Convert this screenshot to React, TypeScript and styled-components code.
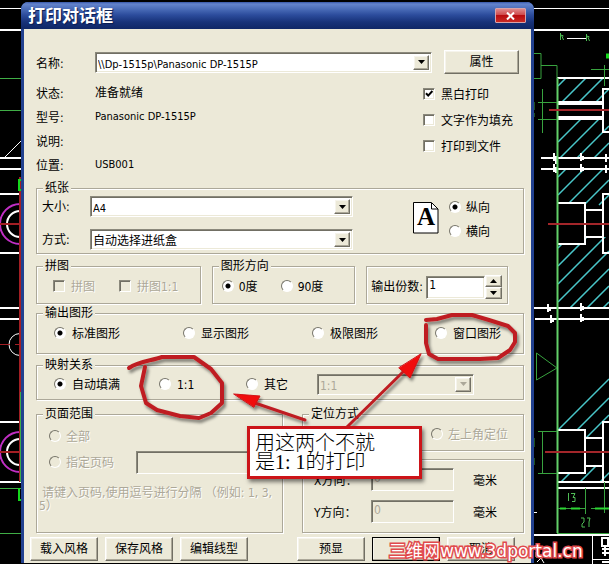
import React from 'react';
import styled, { createGlobalStyle, css } from 'styled-components';

const face = '#ece9d8';
const shade = '#aca899';
const ui = '"DejaVu Sans Condensed", "Noto Sans CJK SC", sans-serif';

const GlobalStyle = createGlobalStyle`
  *, *::before, *::after { box-sizing: border-box; }
  body {
    margin: 0;
    background: #000;
    color: #000;
    font: 12px/14px ${ui};
  }
`;

const sunken = css`
  border: 1px solid;
  border-color: #8b897c #fff #fff #8b897c;
  box-shadow: inset 1px 1px 0 #716f64, inset -1px -1px 0 ${face};
`;

const raised = css`
  border: 1px solid;
  border-color: #fff #716f64 #716f64 #fff;
  box-shadow: inset -1px -1px 0 ${shade}, inset 1px 1px 0 #f6f4ec;
  background: ${face};
`;

const Desktop = styled.main`
  position: relative;
  min-height: 100vh;
  padding: 2px 75px 0 21px;
  overflow: hidden;
`;

const Drawing = styled.svg<{ $side: 'left' | 'right' }>`
  position: absolute;
  top: 0;
  ${p => p.$side}: 0;
`;

const Dialog = styled.section`
  position: relative;
  border: solid #22418f;
  border-width: 0 3px;
  border-radius: 7px 7px 0 0;
  background: ${face};
`;

const TitleBar = styled.header`
  display: flex;
  align-items: center;
  justify-content: space-between;
  height: 27px;
  margin: 0 -3px;
  padding: 0 8px 0 7px;
  border-radius: 7px 7px 0 0;
  background: linear-gradient(#3656a8 0, #6484cc 2px, #4a6cb8 7px, #2c4c9c 13px, #173279 20px, #0f2766 100%);
`;

const Title = styled.h1`
  margin: 0;
  color: #fff;
  font-size: 17px;
  line-height: 24px;
  font-weight: 700;
  text-shadow: 1px 1px 1px #0a1c50;
`;

const CloseButton = styled.button`
  display: flex;
  align-items: center;
  justify-content: center;
  width: 31px;
  height: 15px;
  padding: 0;
  border: 1px solid #d9a3a8;
  border-radius: 1px;
  background: linear-gradient(#e0888a 0, #cf4a4c 45%, #b80c10 50%, #c92a24 100%);
`;

const Form = styled.form`
  padding: 21px 7px 2px 12px;
`;

const NameRow = styled.div`
  display: flex;
  align-items: center;
  height: 24px;
  padding-right: 5px;
`;

const NameLabel = styled.label`
  flex: 0 0 59px;
  padding-top: 4px;
`;

const Combo = styled.span<{ $off?: boolean }>`
  display: flex;
  flex: 1;
  height: 21px;
  padding: 2px;
  background: ${p => (p.$off ? face : '#fff')};
  ${sunken}
`;

const Select = styled.select<{ $latin?: boolean }>`
  appearance: none;
  flex: 1;
  min-width: 0;
  padding: 2px 0 0;
  border: 0;
  background: transparent;
  color: #000;
  font: ${p => (p.$latin ? 11 : 12)}px/15px ${ui};
  &:disabled { color: ${shade}; opacity: 1; }
`;

const ArrowBox = styled.span`
  display: flex;
  align-items: center;
  justify-content: center;
  flex: 0 0 16px;
  ${raised}
`;

const Button = styled.button<{ $primary?: boolean }>`
  height: 24px;
  padding: 0;
  color: #000;
  font: 12px/14px ${ui};
  ${raised}
  ${p => p.$primary && 'outline: 1px solid #000; outline-offset: -1px;'}
`;

const PropertyButton = styled(Button)`
  width: 75px;
  margin-left: 12px;
`;

const InfoRow = styled.div`
  display: flex;
  justify-content: space-between;
  height: 107px;
  padding-top: 7px;
`;

const Facts = styled.dl`
  display: grid;
  grid-template-columns: 59px auto;
  grid-auto-rows: 24px;
  align-items: center;
  margin: 0;
  dt, dd { margin: 0; }
  dt { padding-top: 2px; }
`;

const LatinFact = styled.dd`
  font-size: 11px;
`;

const Options = styled.div`
  display: grid;
  grid-auto-rows: 26px;
  width: 101px;
`;

const Choice = styled.label<{ $off?: boolean; $gap?: number }>`
  display: flex;
  align-items: center;
  gap: ${p => p.$gap ?? 6}px;
  white-space: nowrap;
  ${p => p.$off && `color: ${shade}; text-shadow: 1px 1px 0 #fff;`}
`;

const Caption = styled.span`
  padding-top: 2px;
`;

const Check = styled.input.attrs({ type: 'checkbox' })`
  appearance: none;
  flex: none;
  width: 12px;
  height: 12px;
  margin: 0;
  ${sunken}
  background: #fff;
  &:disabled { background: ${face}; }
  &:checked {
    background: #fff url("data:image/svg+xml,%3Csvg xmlns='http://www.w3.org/2000/svg' viewBox='0 0 10 10'%3E%3Cpath d='M2 4.2l2.2 2.4L8.4 2' fill='none' stroke='black' stroke-width='2'/%3E%3C/svg%3E") center / 10px 10px;
  }
`;

const Radio = styled.input.attrs({ type: 'radio' })`
  appearance: none;
  flex: none;
  width: 12px;
  height: 12px;
  margin: 0;
  border: 1px solid;
  border-color: #77756a #fff #fff #77756a;
  border-radius: 50%;
  background: #fff;
  &:disabled { background: ${face}; }
  &:checked { background: radial-gradient(circle, #000 2px, #fff 3px); }
`;

const Group = styled.fieldset`
  min-width: 0;
  margin: 0;
  padding: 0;
  border: 1px solid ${shade};
  box-shadow: 1px 1px 0 #fff, inset 1px 1px 0 #fff;
`;

const Legend = styled.legend`
  margin-left: 6px;
  padding: 0 2px;
  background: ${face};
  line-height: 14px;
`;

const PaperBody = styled.div`
  display: flex;
  justify-content: space-between;
  padding: 1px 33px 3px 5px;
`;

const PaperFields = styled.div`
  display: grid;
  grid-template-columns: 48px 1fr;
  row-gap: 12px;
  align-items: center;
  flex: 0 1 311px;
`;

const Orientation = styled.div`
  display: flex;
  gap: 10px;
  padding-top: 6px;
`;

const OrientationChoices = styled.div`
  display: grid;
  grid-auto-rows: 24px;
  height: 48px;
  margin-top: -7px;
`;

const TripleRow = styled.div`
  display: grid;
  grid-template-columns: 165fr 144fr 142fr;
  gap: 0 11px;
  margin: 5px 16px 0 0;
`;

const MiniRow = styled.div<{ $cols: string; $left: number }>`
  display: grid;
  grid-template-columns: ${p => p.$cols};
  align-items: center;
  height: 30px;
  padding: 0 0 4px ${p => p.$left}px;
`;

const Copies = styled(Group)`
  display: flex;
  align-items: center;
  margin-top: 7px;
  padding: 4px 5px 0 4px;
`;

const CopiesLabel = styled.label`
  flex: 0 0 55px;
  white-space: nowrap;
`;

const TextBox = styled.input`
  min-width: 0;
  height: 23px;
  padding: 0 2px 4px;
  color: #000;
  font: 12px/14px ${ui};
  background: #fff;
  ${sunken}
  &:disabled { background: ${face}; color: ${shade}; }
`;

const CopiesBox = styled(TextBox)`
  flex: 1;
`;

const Spinner = styled.span`
  display: grid;
  grid-template-rows: 12px 12px;
  flex: 0 0 17px;
`;

const SpinButton = styled.button`
  display: flex;
  align-items: center;
  justify-content: center;
  padding: 0;
  ${raised}
`;

const OutputGroup = styled(Group)`
  margin-top: 2px;
`;

const OutputRow = styled.div`
  display: grid;
  grid-template-columns: 129fr 129fr 123fr 88fr;
  height: 33px;
  padding: 0 0 7px 17px;
`;

const MappingGroup = styled(Group)`
  margin-top: 4px;
`;

const MappingRow = styled.div`
  display: grid;
  grid-template-columns: 105fr 87fr 71fr 157fr;
  align-items: center;
  height: 27px;
  padding: 0 49px 3px 17px;
`;

const LowerRow = styled.div`
  display: grid;
  grid-template-columns: 247fr 222fr;
  gap: 19px;
  margin-top: 7px;
`;

const RangeBody = styled.div`
  padding: 2px 10px 19px 12px;
`;

const RangeLine = styled.div`
  display: flex;
  align-items: center;
  gap: 22px;
  height: 26px;
`;

const RangeBox = styled(TextBox)`
  flex: 1;
`;

const Hint = styled.p`
  margin: 12px -8px 0 -10px;
  color: ${shade};
  text-shadow: 1px 1px 0 #fff;
  line-height: 13px;
  text-indent: 3px;
  word-break: break-all;
`;

const RightStack = styled.div`
  display: flex;
  flex-direction: column;
  gap: 8px;
`;

const AnchorRow = styled.div`
  display: flex;
  align-items: center;
  justify-content: flex-end;
  height: 29px;
  padding: 0 15px 4px 12px;
`;

const OffsetGroup = styled(Group)`
  display: grid;
  grid-template-columns: 57px 83px auto;
  grid-auto-rows: 23px;
  gap: 9px 0;
  align-items: center;
  flex: 1;
  padding: 8px 0 0 11px;
  label, span { padding-top: 2px; }
`;

const Unit = styled.span`
  padding-left: 19px;
`;

const Actions = styled.footer`
  display: flex;
  justify-content: space-between;
  margin: 4px 9px 0 -6px;
`;

const ActionSet = styled.div`
  display: grid;
  grid-template-columns: repeat(3, 68px);
  gap: 7px;
`;

const Markup = styled.svg`
  position: absolute;
  top: 0;
  left: 0;
  pointer-events: none;
`;

const Callout = styled.p`
  position: absolute;
  left: 247px;
  top: 426px;
  width: 175px;
  margin: 0;
  padding: 5px 0 4px 5px;
  border: 3px solid #cc1419;
  background: #fff;
  box-shadow: 2px 3px 4px rgba(0, 0, 0, 0.5);
  font: 20px/19px "Liberation Serif", "Noto Sans CJK SC", serif;
  font-weight: 300;
`;

const Watermark = styled.a`
  position: absolute;
  left: 389px;
  top: 539px;
  color: #fff;
  font: 17px/24px "DejaVu Sans", "Noto Sans CJK SC", sans-serif;
  text-decoration: none;
  white-space: nowrap;
  paint-order: stroke fill;
  -webkit-text-stroke: 3px #e04a4c;
`;

const Triangle = ({ up = false, color = '#000' }: { up?: boolean; color?: string }) => (
  <svg width="7" height="4" viewBox="0 0 7 4" aria-hidden="true">
    <path d={up ? 'M0 4L3.5 0L7 4z' : 'M0 0h7L3.5 4z'} fill={color} />
  </svg>
);

type DropProps = { id: string; value: string; latin?: boolean; off?: boolean };
const Drop = ({ id, value, latin, off }: DropProps) => (
  <Combo $off={off}>
    <Select id={id} $latin={latin} disabled={off} aria-label={off ? '比例' : undefined}>
      <option>{value}</option>
    </Select>
    <ArrowBox><Triangle color={off ? shade : '#000'} /></ArrowBox>
  </Combo>
);

type OptionProps = { name: string; text: string; on?: boolean; off?: boolean; gap?: number };
const RadioOption = ({ name, text, on, off, gap }: OptionProps) => (
  <Choice $off={off} $gap={gap}>
    <Radio name={name} defaultChecked={on} disabled={off} />
    <Caption>{text}</Caption>
  </Choice>
);
const CheckOption = ({ name, text, on, off }: OptionProps) => (
  <Choice $off={off}>
    <Check name={name} defaultChecked={on} disabled={off} />
    <Caption>{text}</Caption>
  </Choice>
);

const LeftDrawing = () => (
  <Drawing $side="left" width="22" height="564" viewBox="0 0 22 564" fill="none" aria-hidden="true">
    <path d="M0 8.5h22M5 157L22 140" stroke="#fff" />
    <path d="M0 30h22M0 158h22M0 169h22M0 194h22M0 253h22M0 308h22M0 319h22M0 422h22M0 482h22" stroke="#fff" strokeWidth="2" />
    <path d="M0 78.5h22M0 110.5h22M0 488.5h22M0 533.5h22" stroke="#3fae46" />
    <circle cx="20" cy="224" r="20" stroke="#c02fc4" strokeWidth="2" />
    <circle cx="20" cy="224" r="13" stroke="#fff" strokeWidth="2" />
    <circle cx="20" cy="344.5" r="11" stroke="#fff" />
    <circle cx="20" cy="452" r="20" stroke="#c02fc4" strokeWidth="2" />
    <circle cx="20" cy="452" r="13" stroke="#fff" strokeWidth="2" />
    <path d="M0 224h22M0 452h22M20 177v215" stroke="#a31f24" strokeWidth="2" />
    <path d="M0 344.5h10m5 0h7M19.5 392v90" stroke="#a31f24" />
    <path d="M20.5 392v90" stroke="#3fae46" />
    <path d="M22 180h-3v10h3M19 488v12h3" stroke="#15d81c" strokeWidth="2" />
  </Drawing>
);

const RightDrawing = () => (
  <Drawing $side="right" width="76" height="564" viewBox="533 0 76 564" fill="none" aria-hidden="true">
    <defs>
      <clipPath id="hatchA"><path d="M558 78h51v24h-51zM558 119h51v39h-51zM558 170h51v33h-51zM585 203h24v7h-24zM558 244h28v-7h23v70h-51z" /></clipPath>
      <clipPath id="hatchB"><path d="M558 430V410L609 370V438H586V430zM558 473h27v-7h24v15h-51z" /></clipPath>
    </defs>
    <g stroke="#49c6c9" strokeWidth="1.5">
      <g clipPath="url(#hatchA)">
        <path d="M558 86l12-12M558 106l32-32M575 106l34-34M592 106l17-17M558 142l26-26M558 160l44-44M575 160l34-34M592 160l17-17M558 177l20-20M558 195l30-30M567 205l42-42M584 205l25-25M599 205l10-10M558 248l14-14M558 266l34-34M558 284l51-51M558 302l51-51M568 310l41-41M585 310l24-24M601 310l8-8" />
      </g>
      <g clipPath="url(#hatchB)"><path d="M558 430l51-51M575 432l34-34M585 439l24-24M558 485l17-17M577 485l22-22M597 485l14-14" /></g>
    </g>
    <path d="M533 8.500h76M567 38.500h20" stroke="#fff" />
    <path d="M533 30h76M557 78h52M557 158h52M541 158h16M541 169h68M557 203h28v41h-28M585 210h18M585 237h18M609 194h-6v59h6M609 89h-6v43h6M533 308h76M535 319h74M557 430h28v43h-28M585 438h18M585 466h18M609 422h-6v60M557 482h52M557 488h52M533 535h76" stroke="#fff" strokeWidth="2" />
    <path d="M557 103h46M557 118h46" stroke="#fff" strokeWidth="4" />
    <path d="M554 153v8M556 156v8M581 153v8M583 156v4M554 164v8M556 167v6M581 164v8M583 167v4M606 154v8M606 165v8M548 304v8M550 307v4M581 303v8M583 306v4M551 315v8M553 318v4M581 314v8M583 317v4" stroke="#fff" strokeWidth="2" />
    <path d="M557.500 78v455" stroke="#62cf68" strokeWidth="2" />
    <path d="M533 53.500h8v25h-8M541 65.500h16v13M591 69.500h18M604.500 65v21M542.500 89v44M538 102.500h19M538 119.500h19M536.500 353v27l20.500-12zM538 431.500h19M538 473.500h19M542.500 431v42M585.500 488v26M604.500 482v31M558 508.500h27M591 508.500h18M557 533.500h52M534 102v8M534 113v4M534 438v9M534 458v7" stroke="#38a33f" />
    <path d="M560 508.500h6M571 508.500h9M595 508.500h14" stroke="#2bd633" strokeWidth="2" />
    <path d="M549 110h60M548 224h61M545 452h64" stroke="#a3262a" strokeWidth="2" />
    <path d="M560.500 33v7M563.500 40l-2-5 2 1M586.500 34v7M589.500 41l-2-5 2 1M568.500 493v8M571 493.500h4l-2 4h2v4h-3M581 518h3v4l-2 2v3h3M587 518h3l-1 4v5" stroke="#4fbd55" />
    <path d="M606 56h3" stroke="#15d81c" strokeWidth="5" />
    <path d="M533 512.500h4M592.500 536v28M593 559.500h16M536 552v5h3M537 562l4-4 3 5" stroke="#fff" />
    <path d="M602 538h6v8h-6zM602 549h7M605 546v10M602 553h7M602 562h7" stroke="#fff" strokeWidth="2" />
  </Drawing>
);

export default function App() {
  return (
    <Desktop>
      <GlobalStyle />
      <LeftDrawing />
      <RightDrawing />
      <Dialog role="dialog" aria-labelledby="title">
        <TitleBar>
          <Title id="title">打印对话框</Title>
          <CloseButton aria-label="关闭">
            <svg width="9" height="8" viewBox="0 0 9 8" aria-hidden="true">
              <path d="M1 0.500L8 7.500M8 0.500L1 7.500" stroke="#fff" strokeWidth="2" />
            </svg>
          </CloseButton>
        </TitleBar>
        <Form onSubmit={e => e.preventDefault()}>
          <NameRow>
            <NameLabel htmlFor="printer">名称:</NameLabel>
            <Drop id="printer" value="\\Dp-1515p\Panasonic DP-1515P" latin />
            <PropertyButton type="button">属性</PropertyButton>
          </NameRow>
          <InfoRow>
            <Facts>
              <dt>状态:</dt><dd>准备就绪</dd>
              <dt>型号:</dt><LatinFact>Panasonic DP-1515P</LatinFact>
              <dt>说明:</dt><dd />
              <dt>位置:</dt><LatinFact>USB001</LatinFact>
            </Facts>
            <Options>
              <CheckOption name="mono" text="黑白打印" on />
              <CheckOption name="fill" text="文字作为填充" />
              <CheckOption name="file" text="打印到文件" />
            </Options>
          </InfoRow>

          <Group>
            <Legend>纸张</Legend>
            <PaperBody>
              <PaperFields>
                <label htmlFor="size">大小:</label>
                <Drop id="size" value="A4" latin />
                <label htmlFor="source">方式:</label>
                <Drop id="source" value="自动选择进纸盒" />
              </PaperFields>
              <Orientation>
                <svg width="26" height="32" viewBox="0 0 26 32" aria-hidden="true">
                  <path d="M0.500 0.500h18l6.500 6.500v24H0.500z" fill="#fff" stroke="#000" />
                  <path d="M18.500 1v6H25" fill="none" stroke="#000" />
                  <text x="13" y="23" textAnchor="middle" fontFamily="Liberation Serif" fontWeight="700" fontSize="25">A</text>
                </svg>
                <OrientationChoices>
                  <RadioOption name="orient" text="纵向" on gap={5} />
                  <RadioOption name="orient" text="横向" gap={5} />
                </OrientationChoices>
              </Orientation>
            </PaperBody>
          </Group>

          <TripleRow>
            <Group>
              <Legend>拼图</Legend>
              <MiniRow $cols="66px auto" $left={16}>
                <CheckOption name="tile" text="拼图" off />
                <CheckOption name="tile1" text="拼图1:1" off />
              </MiniRow>
            </Group>
            <Group>
              <Legend>图形方向</Legend>
              <MiniRow $cols="59px auto" $left={9}>
                <RadioOption name="angle" text="0度" on gap={5} />
                <RadioOption name="angle" text="90度" gap={5} />
              </MiniRow>
            </Group>
            <Copies aria-label="输出份数">
              <CopiesLabel htmlFor="copies">输出份数:</CopiesLabel>
              <CopiesBox id="copies" defaultValue="1" />
              <Spinner>
                <SpinButton type="button" aria-label="增加"><Triangle up /></SpinButton>
                <SpinButton type="button" aria-label="减少"><Triangle /></SpinButton>
              </Spinner>
            </Copies>
          </TripleRow>

          <OutputGroup>
            <Legend>输出图形</Legend>
            <OutputRow>
              <RadioOption name="output" text="标准图形" on />
              <RadioOption name="output" text="显示图形" />
              <RadioOption name="output" text="极限图形" />
              <RadioOption name="output" text="窗口图形" />
            </OutputRow>
          </OutputGroup>

          <MappingGroup>
            <Legend>映射关系</Legend>
            <MappingRow>
              <RadioOption name="mapping" text="自动填满" on />
              <RadioOption name="mapping" text="1:1" />
              <RadioOption name="mapping" text="其它" />
              <Drop id="ratio" value="1:1" off />
            </MappingRow>
          </MappingGroup>

          <LowerRow>
            <Group>
              <Legend>页面范围</Legend>
              <RangeBody>
                <RangeLine><RadioOption name="range" text="全部" off gap={5} /></RangeLine>
                <RangeLine>
                  <RadioOption name="range" text="指定页码" off gap={5} />
                  <RangeBox aria-label="页码" disabled />
                </RangeLine>
                <Hint>请键入页码,使用逗号进行分隔 （例如: 1, 3, 5）</Hint>
              </RangeBody>
            </Group>
            <RightStack>
              <Group>
                <Legend>定位方式</Legend>
                <AnchorRow>
                  <RadioOption name="anchor" text="左上角定位" off gap={5} />
                </AnchorRow>
              </Group>
              <OffsetGroup aria-label="偏移">
                <label htmlFor="dx">X方向：</label>
                <TextBox id="dx" defaultValue="0" disabled />
                <Unit>毫米</Unit>
                <label htmlFor="dy">Y方向：</label>
                <TextBox id="dy" defaultValue="0" disabled />
                <Unit>毫米</Unit>
              </OffsetGroup>
            </RightStack>
          </LowerRow>

          <Actions>
            <ActionSet>
              <Button type="button">载入风格</Button>
              <Button type="button">保存风格</Button>
              <Button type="button">编辑线型</Button>
            </ActionSet>
            <ActionSet>
              <Button type="button">预显</Button>
              <Button type="submit" $primary aria-label="确定" />
              <Button type="button">取消</Button>
            </ActionSet>
          </Actions>
        </Form>
      </Dialog>

      <Markup width="609" height="564" viewBox="0 0 609 564" fill="none" aria-hidden="true">
        <defs>
          <filter id="soft" x="-20%" y="-20%" width="150%" height="150%">
            <feDropShadow dx="2" dy="3" stdDeviation="1.5" floodOpacity="0.45" />
          </filter>
        </defs>
        <g filter="url(#soft)" stroke="#bf1f22" strokeLinecap="round" strokeLinejoin="round">
          <path d="M129 368C139 361 151 361 162 357H194L211 369L222 383V403L211 413L199 418L180 416L157 410L146 403L141 386L145 367" strokeWidth="4" />
          <path d="M426 320L437 319L452 315H472L489 320L508 326L515 333V342L510 350L498 358L480 359H438L429 354L426 343V325" strokeWidth="4" />
          <path d="M305 420L252 402M347 427L405 370" strokeWidth="3" />
          <path d="M234 394L260 396L254 407zM421 354L410 378L399 368z" fill="#f00c0c" stroke="#d01418" strokeWidth="1" />
        </g>
      </Markup>
      <Callout>用这两个不就<br />是1: 1的打印</Callout>
      <Watermark href="#portal">三维网www.3dportal.cn</Watermark>
    </Desktop>
  );
}
